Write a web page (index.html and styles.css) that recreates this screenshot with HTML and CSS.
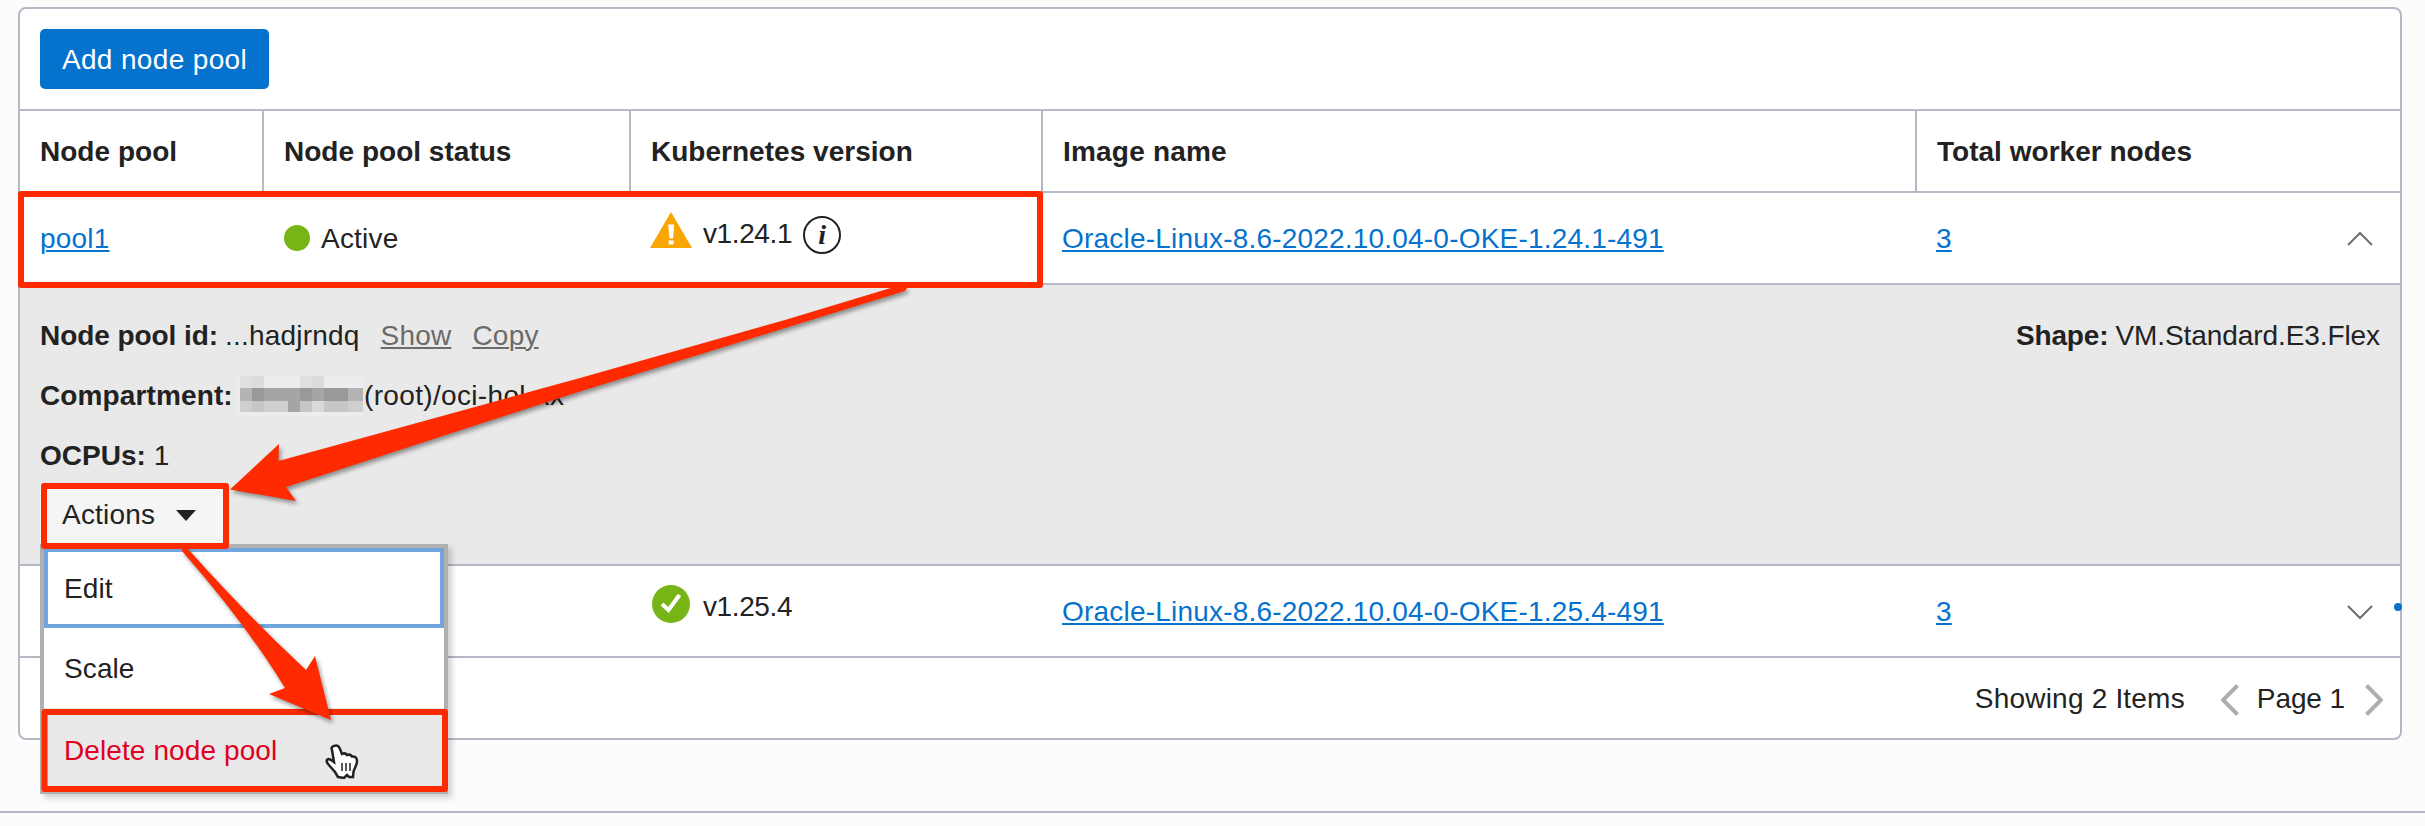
FILE: index.html
```html
<!DOCTYPE html>
<html lang="en">
<head>
<meta charset="utf-8">
<title>Node pools</title>
<link rel="stylesheet" href="styles.css">
</head>
<body>
<main class="page">
  <section class="card">
    <div class="toolbar"><button class="btn-primary">Add node pool</button></div>
    <div class="row head">
      <div class="cell">Node pool</div>
      <div class="cell">Node pool status</div>
      <div class="cell">Kubernetes version</div>
      <div class="cell image-head">Image name</div>
      <div class="cell">Total worker nodes</div>
    </div>
    <div class="row">
      <div class="cell"><a class="link">pool1</a></div>
      <div class="cell status"><span class="dot"></span><span class="active">Active</span></div>
      <div class="cell version">
        <svg class="warn" width="42" height="36" viewBox="0 0 42 36"><path d="M21 0 42 36H0Z" fill="#f9a700"/><path d="M18.2 12.5h6l-1.2 14h-3.6zM18.6 28.5h5v4h-5z" fill="#fff"/></svg>
        <span>v1.24.1</span>
        <svg class="info" width="40" height="40" viewBox="0 0 40 40"><circle cx="20" cy="20" r="18" fill="none" stroke="#222" stroke-width="2"/><text class="info-i" x="20" y="28.500" text-anchor="middle">i</text></svg>
      </div>
      <div class="cell image"><a class="link">Oracle-Linux-8.6-2022.10.04-0-OKE-1.24.1-491</a></div>
      <div class="cell last"><a class="link">3</a>
        <svg width="26" height="16" viewBox="0 0 26 16"><path d="M1 14 13 2 25 14" fill="none" stroke="#6f6f6f" stroke-width="2"/></svg>
      </div>
    </div>
    <div class="details">
      <div class="facts">
        <div class="fact"><b class="k-id">Node pool id:</b><span class="v-id">...hadjrndq</span><a class="muted show">Show</a><a class="muted copy">Copy</a></div>
        <div class="fact"><b class="k-comp">Compartment:</b>
          <svg class="mosaic" width="126" height="40" viewBox="0 0 126 40" shape-rendering="crispEdges">
            <path fill="#ededed" d="M0 0h126v40H0z"/>
            <path fill="#e0e0e0" d="M3 0h12v12H3zM63 0h12v12H63z"/><path fill="#dcdcdc" d="M15 0h12v12H15zM75 0h12v12H75z"/>
            <path fill="#b4b4b4" d="M3 12h12v13H3zM111 12h15v13h-15z"/><path fill="#999" d="M15 12h12v13H15zM63 12h12v13H63zM87 12h24v13H87z"/>
            <path fill="#a5a5a5" d="M27 12h36v13H27zM75 12h12v13H75z"/>
            <path fill="#cfcfcf" d="M3 25h12v11H3zM27 25h24v11H27zM111 25h15v11h-15z"/><path fill="#c6c6c6" d="M15 25h12v11H15zM63 25h12v11H63zM87 25h24v11H87z"/>
            <path fill="#a5a5a5" d="M51 25h12v11H51z"/><path fill="#d9d9d9" d="M75 25h12v11H75z"/>
          </svg><span class="v-comp">(root)/oci-hol-xx</span></div>
        <div class="fact"><b class="k-cpu">OCPUs:</b><span>1</span></div>
        <div class="action-wrap">
          <button class="actions"><span>Actions</span><svg width="20" height="11" viewBox="0 0 20 11"><path d="M0 0h20L10 11z" fill="#222"/></svg></button>
          <div class="menu">
            <div class="item focus">Edit</div>
            <div class="item scale">Scale</div>
            <div class="item danger">Delete node pool</div>
          </div>
        </div>
      </div>
      <div class="fact shape"><b>Shape:</b><span>VM.Standard.E3.Flex</span></div>
    </div>
    <div class="row second">
      <div class="cell"></div>
      <div class="cell"></div>
      <div class="cell version">
        <svg class="check" width="38" height="38" viewBox="0 0 38 38"><circle cx="19" cy="19" r="19" fill="#77b516"/><path d="M10 19 16.500 25 27.500 10" fill="none" stroke="#fff" stroke-width="4"/></svg>
        <span>v1.25.4</span>
      </div>
      <div class="cell image"><a class="link">Oracle-Linux-8.6-2022.10.04-0-OKE-1.25.4-491</a></div>
      <div class="cell last"><a class="link">3</a>
        <svg width="26" height="16" viewBox="0 0 26 16"><path d="M1 2 13 14 25 2" fill="none" stroke="#6f6f6f" stroke-width="2"/></svg>
      </div>
      <span class="edge-dot"></span>
    </div>
    <div class="footer">
      <span class="showing">Showing 2 Items</span>
      <svg class="prev" width="18" height="32" viewBox="0 0 18 32"><path d="M16.500 1.500 2 16 16.500 30.500" fill="none" stroke="#adadad" stroke-width="4"/></svg>
      <span class="pageno">Page 1</span>
      <svg class="next" width="18" height="32" viewBox="0 0 18 32"><path d="M1.500 1.500 16 16 1.500 30.500" fill="none" stroke="#adadad" stroke-width="4"/></svg>
    </div>
  </section>
  <svg class="marks" width="2425" height="826" viewBox="0 0 2425 826">
    <g fill="none" stroke="#ff2a00" stroke-width="6" stroke-linejoin="round">
      <path d="M21 194H1040V285H21Z"/>
      <path d="M44 486H226V546H44Z"/>
      <path d="M44.500 712H445V789H44.500Z"/>
    </g>
    <g class="arrows" fill="#ff2a00">
      <path d="M894 287H907Q907 289 905 291L811 320 580 391.500 286 487 296 501 230 489.500 279 444 278.500 461 580 378 785 320Z"/>
      <path d="M182 549H188Q246 614 306 670L315 656 331 720 269 694 285 688Q246 624 182 551Z"/>
    </g>
    <g transform="translate(326 745)"><path d="M8 1c3-1.500 5 0 6 3l2 5c2-1 4-.5 5 1 2-.8 4 0 5 1.500 3-.5 5 1.500 5 4.500 0 5-3 7-3.500 11l-.5 5h-4l-2-2-3 3-6-1-3-5-7-8c-3-4 0-6 3-4l3 2L6 5C5 3 6 1.500 8 1Z" fill="#fff" stroke="#222" stroke-width="2.500"/><path d="M16 18v8M20 18v8M24 18v8" stroke="#222" stroke-width="1.500"/></g>
  </svg>
</main>
</body>
</html>
```
FILE: styles.css
```css
* { box-sizing: border-box; }
body { margin: 0; background: #fcfcfc; color: #222; font: 28px "Liberation Sans", Arial, sans-serif; letter-spacing: .2px; overflow: hidden; }
svg { display: block; flex: none; }
b { font-weight: 700; letter-spacing: 0; }
button { font: inherit; color: inherit; border: 0; margin: 0; }
.page { position: relative; height: 813px; padding: 7px 23px 0 18px; border-bottom: 2px solid #b4b9c5; }
.card { height: 733px; border: 2px solid #b4b9c5; border-radius: 8px; background: #fff; white-space: nowrap; }
.toolbar { height: 100px; padding: 20px; }
.btn-primary { width: 229px; height: 60px; padding: 2px 0 0; border-radius: 5px; background: #0572ce; color: #fff; letter-spacing: .35px; }
.row { position: relative; display: grid; grid-template-columns: 244px 367px 412px 874px 1fr; height: 92px; border-top: 2px solid #b4b9c5; }
.cell { display: flex; align-items: center; padding: 2px 0 0 20px; }
.head { height: 82px; font-weight: 700; letter-spacing: .02px; }
.head .cell { border-right: 2px solid #b4b9c5; }
.head .cell:last-child { border-right: 0; }
.head .image-head { letter-spacing: .2px; }
.link { color: #0572ce; text-decoration: underline 2px; text-underline-offset: 2px; }
.dot { width: 26px; height: 26px; margin: 0 11px 2px 0; border-radius: 50%; background: #77b516; }
.version { padding: 2px 0 10px 19px; letter-spacing: -.4px; }
.warn { margin: 0 11px 8px 0; }
.info { margin: 2px 0 0 10px; }
.info-i { font: italic 700 28px "Liberation Serif", serif; fill: #222; }
.check { margin: 0 13px 6px 2px; }
.image { padding-left: 19px; letter-spacing: .2px; }
.last { justify-content: space-between; padding: 2px 27px 0 19px; }
.details { display: flex; justify-content: space-between; height: 281px; padding: 20px; border-top: 2px solid #b4b9c5; background: #e9e9e9; }
.fact { display: flex; align-items: center; height: 60px; padding-top: 2px; }
.fact b { margin-right: 8px; }
.fact .k-id { margin-right: 7px; letter-spacing: -.06px; }
.fact .k-comp { width: 192px; margin-right: 5px; letter-spacing: .12px; }
.muted { color: #6b6b6b; text-decoration: underline 2px; text-underline-offset: 2px; margin-left: 21px; }
.mosaic { margin: 0 1px 0 0; }
.v-comp { letter-spacing: .34px; }
.shape { letter-spacing: -.08px; }
.shape b { margin-right: 7px; letter-spacing: -.15px; }
.action-wrap { position: relative; }
.actions { display: flex; align-items: center; gap: 21px; width: 188px; height: 60px; padding: 0 0 0 22px; background: #f5f5f5; letter-spacing: .2px; }
.menu { position: absolute; left: 0; top: 59px; z-index: 2; width: 408px; height: 250px; border: 4px solid #b0b0b0; background: #fff; box-shadow: 4px 4px 6px rgba(0,0,0,.18); }
.item { display: flex; align-items: center; height: 80px; padding: 2px 0 0 20px; letter-spacing: .1px; }
.focus { border: 4px solid #70a5e0; padding-left: 16px; }
.danger { height: 82px; padding-top: 3px; background: #e9e9e9; color: #e0001f; }
.edge-dot { position: absolute; right: -2px; top: 37px; width: 8px; height: 8px; border-radius: 50%; background: #0572ce; }
.footer { display: flex; align-items: center; justify-content: flex-end; height: 82px; padding: 2px 17px 0 0; border-top: 2px solid #b4b9c5; }
.prev { margin: 2px 18px 0 36px; }
.pageno { letter-spacing: -.1px; }
.next { margin: 2px 0 0 20px; }
.marks { position: absolute; left: 0; top: 0; z-index: 3; pointer-events: none; }
.arrows { filter: drop-shadow(2px 3px 2px rgba(0,0,0,.4)); }
```
